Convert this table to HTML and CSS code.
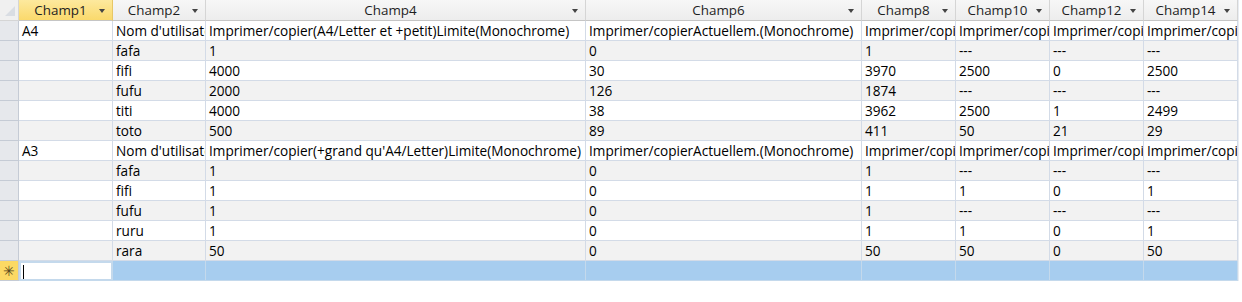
FILE: index.html
```html
<!DOCTYPE html>
<html>
<head>
<meta charset="utf-8">
<link rel="stylesheet" href="styles.css">
</head>
<body>
<div class="sheet">
  <div class="row head">
    <div class="sel corner"><svg width="12" height="12" viewBox="0 0 12 12"><path d="M11 1 L11 11 L1 11 Z" fill="#d9dde3"/></svg></div>
    <div class="hc c1 active"><span class="ht">Champ1</span><span class="arr"></span></div>
    <div class="hc c2"><span class="ht">Champ2</span><span class="arr"></span></div>
    <div class="hc c4"><span class="ht">Champ4</span><span class="arr"></span></div>
    <div class="hc c6"><span class="ht">Champ6</span><span class="arr"></span></div>
    <div class="hc c8"><span class="ht">Champ8</span><span class="arr"></span></div>
    <div class="hc c8"><span class="ht">Champ10</span><span class="arr"></span></div>
    <div class="hc c8"><span class="ht">Champ12</span><span class="arr"></span></div>
    <div class="hc c8"><span class="ht">Champ14</span><span class="arr"></span></div>
  </div>

  <div class="row"><div class="sel"></div><div class="c c1">A4</div><div class="c c2">Nom d'utilisateur</div><div class="c c4">Imprimer/copier(A4/Letter et +petit)Limite(Monochrome)</div><div class="c c6">Imprimer/copierActuellem.(Monochrome)</div><div class="c c8">Imprimer/copier</div><div class="c c8">Imprimer/copier</div><div class="c c8">Imprimer/copier</div><div class="c c8">Imprimer/copier</div></div>
  <div class="row alt"><div class="sel"></div><div class="c c1"></div><div class="c c2">fafa</div><div class="c c4">1</div><div class="c c6">0</div><div class="c c8">1</div><div class="c c8">---</div><div class="c c8">---</div><div class="c c8">---</div></div>
  <div class="row"><div class="sel"></div><div class="c c1"></div><div class="c c2">fifi</div><div class="c c4">4000</div><div class="c c6">30</div><div class="c c8">3970</div><div class="c c8">2500</div><div class="c c8">0</div><div class="c c8">2500</div></div>
  <div class="row alt"><div class="sel"></div><div class="c c1"></div><div class="c c2">fufu</div><div class="c c4">2000</div><div class="c c6">126</div><div class="c c8">1874</div><div class="c c8">---</div><div class="c c8">---</div><div class="c c8">---</div></div>
  <div class="row"><div class="sel"></div><div class="c c1"></div><div class="c c2">titi</div><div class="c c4">4000</div><div class="c c6">38</div><div class="c c8">3962</div><div class="c c8">2500</div><div class="c c8">1</div><div class="c c8">2499</div></div>
  <div class="row alt"><div class="sel"></div><div class="c c1"></div><div class="c c2">toto</div><div class="c c4">500</div><div class="c c6">89</div><div class="c c8">411</div><div class="c c8">50</div><div class="c c8">21</div><div class="c c8">29</div></div>
  <div class="row"><div class="sel"></div><div class="c c1">A3</div><div class="c c2">Nom d'utilisateur</div><div class="c c4">Imprimer/copier(+grand qu'A4/Letter)Limite(Monochrome)</div><div class="c c6">Imprimer/copierActuellem.(Monochrome)</div><div class="c c8">Imprimer/copier</div><div class="c c8">Imprimer/copier</div><div class="c c8">Imprimer/copier</div><div class="c c8">Imprimer/copier</div></div>
  <div class="row alt"><div class="sel"></div><div class="c c1"></div><div class="c c2">fafa</div><div class="c c4">1</div><div class="c c6">0</div><div class="c c8">1</div><div class="c c8">---</div><div class="c c8">---</div><div class="c c8">---</div></div>
  <div class="row"><div class="sel"></div><div class="c c1"></div><div class="c c2">fifi</div><div class="c c4">1</div><div class="c c6">0</div><div class="c c8">1</div><div class="c c8">1</div><div class="c c8">0</div><div class="c c8">1</div></div>
  <div class="row alt"><div class="sel"></div><div class="c c1"></div><div class="c c2">fufu</div><div class="c c4">1</div><div class="c c6">0</div><div class="c c8">1</div><div class="c c8">---</div><div class="c c8">---</div><div class="c c8">---</div></div>
  <div class="row"><div class="sel"></div><div class="c c1"></div><div class="c c2">ruru</div><div class="c c4">1</div><div class="c c6">0</div><div class="c c8">1</div><div class="c c8">1</div><div class="c c8">0</div><div class="c c8">1</div></div>
  <div class="row alt"><div class="sel"></div><div class="c c1"></div><div class="c c2">rara</div><div class="c c4">50</div><div class="c c6">0</div><div class="c c8">50</div><div class="c c8">50</div><div class="c c8">0</div><div class="c c8">50</div></div>

  <div class="row newrow"><div class="sel star">✳</div><div class="c c1 edit"><span class="caret"></span></div><div class="c c2"></div><div class="c c4"></div><div class="c c6"></div><div class="c c8"></div><div class="c c8"></div><div class="c c8"></div><div class="c c8"></div></div>
</div>
</body>
</html>
```
FILE: styles.css
```css
* { box-sizing: border-box; }
html, body { margin: 0; padding: 0; background: #ffffff; }
body { width: 1242px; height: 302px; overflow: hidden; }
.sheet {
  font-family: "Open Sans", "Noto Sans", sans-serif;
  font-size: 13.6px;
  color: #000;
  width: 1239px;
  border-right: 1px solid #e8ecf2;
}
.row { display: flex; height: 20px; background: #fff; }
.row.alt { background: #f2f2f2; }
.row.head { height: 21px; background: linear-gradient(#f7f7f7, #ececec); }
.sel {
  width: 19px; flex: none;
  background: #e6e8ec;
  border-right: 1px solid #c5cbd5;
  border-bottom: 1px solid #c5cbd5;
}
.corner { display: flex; align-items: flex-end; justify-content: flex-end; padding: 0 2px 3px 0; background: #f0f0f0; border-color: #d5d5d5; }
.corner svg { display: block; }
.c, .hc { flex: none; overflow: hidden; white-space: nowrap; }
.c {
  border-right: 1px solid #d3dbe7;
  border-bottom: 1px solid #d3dbe7;
  padding: 0 0 0 3px;
  line-height: 19px;
}
.c1 { width: 94px; }
.c2 { width: 93px; }
.c4 { width: 380px; }
.c6 { width: 276px; }
.c8 { width: 94px; }
.hc {
  display: flex; align-items: center;
  border-right: 1px solid #d5d5d5;
  border-bottom: 1px solid #c5c5c5;
  font-size: 13.4px;
  color: #1e1e1e;
  padding: 0 7px 0 3px;
  height: 21px;
}
.hc.active { background: linear-gradient(#fde99e, #fad96c); border-right-color: #e7c766; }
.ht { flex: 1; text-align: center; }
.arr {
  width: 0; height: 0; flex: none;
  border-left: 3.5px solid transparent;
  border-right: 3.5px solid transparent;
  border-top: 4px solid #444;
  margin-top: 1px;
}
.newrow { background: #a7cdef; }
.newrow .c { border-color: #c4d9ec; }
.star {
  background: #fcd964;
  color: #5a4a20;
  font-size: 14px;
  text-align: center;
  line-height: 19px;
}
.edit {
  background: #fff;
  border: 2px solid #f2a9b0;
  padding: 2px 0 0 2px;
}
.caret { display: block; width: 1px; height: 14px; background: #000; }
```
